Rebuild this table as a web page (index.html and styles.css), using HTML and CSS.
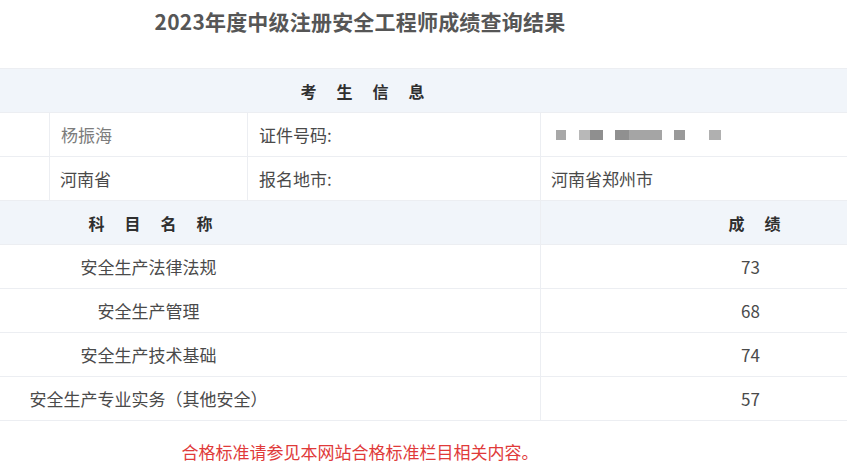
FILE: index.html
```html
<!DOCTYPE html>
<html lang="zh-CN">
<head>
<meta charset="utf-8">
<title>2023年度中级注册安全工程师成绩查询结果</title>
<link rel="stylesheet" href="styles.css">
</head>
<body>
<div class="viewport">
  <div class="page">
    <h1 class="title">2023年度中级注册安全工程师成绩查询结果</h1>
    <table class="result">
      <colgroup>
        <col class="c1"><col class="c2"><col class="c3"><col class="c4">
      </colgroup>
      <tr class="band">
        <th colspan="4" class="head"><span class="spaced">考生信息</span></th>
      </tr>
      <tr class="row">
        <td class="label"></td>
        <td class="name">杨振海</td>
        <td class="label">证件号码:</td>
        <td class="value">
          <span class="mask">
            <span class="blk b1"></span>
            <span class="blk b2"></span>
            <span class="blk b3"></span>
            <span class="blk b4"></span>
            <span class="blk b5"></span>
          </span>
        </td>
      </tr>
      <tr class="row">
        <td class="label"></td>
        <td class="value">河南省</td>
        <td class="label">报名地市:</td>
        <td class="value">河南省郑州市</td>
      </tr>
      <tr class="band">
        <th colspan="3" class="head"><span class="spaced">科目名称</span></th>
        <th class="head"><span class="spaced">成绩</span></th>
      </tr>
      <tr class="row">
        <td colspan="3" class="subject">安全生产法律法规</td>
        <td class="score">73</td>
      </tr>
      <tr class="row">
        <td colspan="3" class="subject">安全生产管理</td>
        <td class="score">68</td>
      </tr>
      <tr class="row">
        <td colspan="3" class="subject">安全生产技术基础</td>
        <td class="score">74</td>
      </tr>
      <tr class="row">
        <td colspan="3" class="subject">安全生产专业实务（其他安全）</td>
        <td class="score">57</td>
      </tr>
    </table>
    <p class="note">合格标准请参见本网站合格标准栏目相关内容。</p>
  </div>
</div>
</body>
</html>
```

FILE: styles.css
```css
html, body {
  margin: 0;
  padding: 0;
  background: #ffffff;
}
body {
  font-family: "Noto Sans CJK SC", "Liberation Sans", sans-serif;
  color: #4a4a4a;
  overflow: hidden;
}
.viewport {
  width: 847px;
  height: 475px;
  overflow: hidden;
}
.page {
  width: 1208px;
  margin-left: -244px;
}
.title {
  margin: 0;
  padding-top: 6px;
  height: 68px;
  box-sizing: border-box;
  text-align: center;
  font-size: 21px;
  line-height: 30px;
  font-weight: bold;
  color: #565656;
  letter-spacing: 0.2px;
}
.result {
  width: 1208px;
  border-collapse: collapse;
  table-layout: fixed;
}
.c1 { width: 293px; }
.c2 { width: 198px; }
.c3 { width: 293px; }
.c4 { width: 424px; }
.result td, .result th {
  height: 44px;
  padding: 0;
  border: 1px solid #eceef2;
  font-size: 17px;
  box-sizing: border-box;
}
.result .band th {
  background: #f1f5fa;
  font-weight: bold;
  color: #2f2f2f;
  font-size: 16px;
  text-align: center;
}
.spaced {
  letter-spacing: 20px;
}
.result th.head {
  padding-left: 24px;
}
.result td.label,
.result td.value,
.result td.name {
  text-align: left;
  padding-left: 11px;
  color: #4a4a4a;
}
.result td.name {
  color: #7c7c7c;
}
.result td.value {
  padding-left: 10px;
}
.result td.subject {
  text-align: center;
  color: #4a4a4a;
}
.result td.score {
  text-align: center;
  color: #4a4a4a;
  padding-right: 4px;
}
.mask {
  display: flex;
  align-items: center;
  height: 10px;
  filter: blur(0.6px);
  padding-left: 5px;
}
.blk {
  display: block;
  height: 10px;
  background: #a8a8a8;
}
.b1 { width: 10px; }
.b2 { width: 24px; margin-left: 13px; background: linear-gradient(90deg, #b8b8b8 0 45%, #8f8f8f 45% 100%); }
.b3 { width: 47px; margin-left: 12px; background: linear-gradient(90deg, #909090 0 30%, #a5a5a5 30% 100%); }
.b4 { width: 11px; margin-left: 12px; background: #9a9a9a; }
.b5 { width: 12px; margin-left: 24px; background: #b0b0b0; }
.note {
  margin: 19px 0 0;
  text-align: center;
  color: #e03a3a;
  font-size: 17px;
  line-height: 24px;
  letter-spacing: 0;
}
```
